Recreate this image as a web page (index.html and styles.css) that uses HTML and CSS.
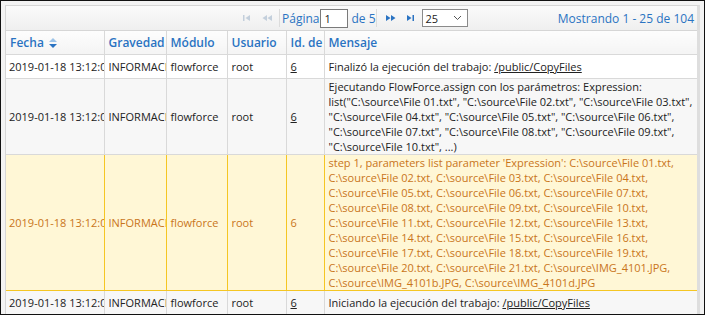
FILE: index.html
```html
<!DOCTYPE html>
<html>
<head>
    <title>Registro</title>
    <link rel="stylesheet" href="styles.css">
</head>
<body>
    <div class="frame">
        <div class="grid">
            <!-- Barra de paginación -->
            <div class="toolbar">
                <div class="pager">
                    <span class="pbtn off first">
                        <svg width="10" height="8" viewBox="0 0 10 8"><rect x="1" y="1" width="1.5" height="6"/><path d="M8 1 L3.5 4 L8 7 Z"/></svg>
                    </span>
                    <span class="pbtn off">
                        <svg width="12" height="8" viewBox="0 0 12 8"><path d="M6 1 L1.5 4 L6 7 Z M11 1 L6.5 4 L11 7 Z"/></svg>
                    </span>
                    <span class="sep"></span>
                    <span class="lbl">Página</span>
                    <input class="page-input" type="text" value="1">
                    <span class="lbl">de 5</span>
                    <span class="sep sep-right"></span>
                    <span class="pbtn next">
                        <svg width="12" height="8" viewBox="0 0 12 8"><path d="M1 1 L5.5 4 L1 7 Z M6 1 L10.5 4 L6 7 Z"/></svg>
                    </span>
                    <span class="pbtn">
                        <svg width="10" height="8" viewBox="0 0 10 8"><path d="M2 1 L6.5 4 L2 7 Z"/><rect x="7.5" y="1" width="1.5" height="6"/></svg>
                    </span>
                    <span class="size-select">
                        <span>25</span>
                        <svg width="9" height="6" viewBox="0 0 9 6"><path d="M1 1 L4.5 4.5 L8 1" fill="none" stroke="#555" stroke-width="1"/></svg>
                    </span>
                </div>
                <div class="count">Mostrando 1 - 25 de 104</div>
            </div>

            <!-- Tabla de mensajes -->
            <table class="log">
                <colgroup>
                    <col style="width:98px">
                    <col style="width:62px">
                    <col style="width:61px">
                    <col style="width:59px">
                    <col style="width:38px">
                    <col>
                </colgroup>
                <thead>
                    <tr>
                        <th>Fecha <span class="sort"><svg width="8" height="11" viewBox="0 0 8 11"><path d="M4 0 L8 4 L0 4 Z" fill="#9cc3e8"/><path d="M0 6 L8 6 L4 10 Z" fill="#2a73c2"/></svg></span></th>
                        <th>Gravedad</th>
                        <th>Módulo</th>
                        <th>Usuario</th>
                        <th>Id. de</th>
                        <th>Mensaje</th>
                    </tr>
                </thead>
                <tbody>
                    <tr>
                        <td class="cut"><div class="clip">2019-01-18 13:12:03</div></td>
                        <td class="cut"><div class="clip">INFORMACIÓN</div></td>
                        <td>flowforce</td>
                        <td>root</td>
                        <td><a href="#">6</a></td>
                        <td>Finalizó la ejecución del trabajo: <a href="#">/public/CopyFiles</a></td>
                    </tr>
                    <tr class="alt">
                        <td class="cut"><div class="clip">2019-01-18 13:12:03</div></td>
                        <td class="cut"><div class="clip">INFORMACIÓN</div></td>
                        <td>flowforce</td>
                        <td>root</td>
                        <td><a href="#">6</a></td>
                        <td>Ejecutando FlowForce.assign con los parámetros: Expression: list("C:\source\File 01.txt", "C:\source\File 02.txt", "C:\source\File 03.txt", "C:\source\File 04.txt", "C:\source\File 05.txt", "C:\source\File 06.txt", "C:\source\File 07.txt", "C:\source\File 08.txt", "C:\source\File 09.txt", "C:\source\File 10.txt", ...)</td>
                    </tr>
                    <tr class="warn">
                        <td class="cut"><div class="clip">2019-01-18 13:12:03</div></td>
                        <td class="cut"><div class="clip">INFORMACIÓN</div></td>
                        <td>flowforce</td>
                        <td>root</td>
                        <td>6</td>
                        <td>step 1, parameters list parameter 'Expression': C:\source\File 01.txt, C:\source\File 02.txt, C:\source\File 03.txt, C:\source\File 04.txt, C:\source\File 05.txt, C:\source\File 06.txt, C:\source\File 07.txt, C:\source\File 08.txt, C:\source\File 09.txt, C:\source\File 10.txt, C:\source\File 11.txt, C:\source\File 12.txt, C:\source\File 13.txt, C:\source\File 14.txt, C:\source\File 15.txt, C:\source\File 16.txt, C:\source\File 17.txt, C:\source\File 18.txt, C:\source\File 19.txt, C:\source\File 20.txt, C:\source\File 21.txt, C:\source\IMG_4101.JPG, C:\source\IMG_4101b.JPG, C:\source\IMG_4101d.JPG</td>
                    </tr>
                    <tr class="alt">
                        <td class="cut"><div class="clip">2019-01-18 13:12:03</div></td>
                        <td class="cut"><div class="clip">INFORMACIÓN</div></td>
                        <td>flowforce</td>
                        <td>root</td>
                        <td><a href="#">6</a></td>
                        <td>Iniciando la ejecución del trabajo: <a href="#">/public/CopyFiles</a></td>
                    </tr>
                </tbody>
            </table>
        </div>
    </div>
</body>
</html>
```

FILE: styles.css
```css
body {
    margin: 0;
    padding: 0;
    font-family: "Open Sans", "Noto Sans", sans-serif;
    font-size: 11px;
    color: #222;
}

/* Marco exterior de la captura */
.frame {
    width: 705px;
    height: 315px;
    box-sizing: border-box;
    border: 1px solid #111;
    background-color: #f3f3f3;
    padding: 4px 4px 0 4px;
    overflow: hidden;
}

.grid {
    border: 1px solid #d6d6d6;
    border-right: 3px solid #dedede;
    background-color: #fff;
}

/* Barra de paginación */
.toolbar {
    display: flex;
    align-items: center;
    height: 24px;
    padding: 0 3px 0 0;
    background: linear-gradient(#fbfbfb, #efefef);
    border-bottom: 1px solid #d6d6d6;
}

.pager {
    display: flex;
    align-items: center;
    padding-left: 236px;
}

.pbtn {
    display: inline-flex;
    align-items: center;
    fill: #2a73c2;
}

.pbtn.off {
    fill: #c3cfdc;
}

.pbtn.first {
    margin-right: 9px;
}

.pbtn.next {
    margin-right: 8px;
}

.sep {
    width: 1px;
    height: 18px;
    background-color: #dcdcdc;
    margin: 0 2px 0 6px;
}

.sep.sep-right {
    margin: 0 8px 0 0;
}

.lbl {
    color: #2a73c2;
    font-size: 12px;
}

.page-input {
    width: 28px;
    height: 19px;
    box-sizing: border-box;
    margin: 0 3px 0 1px;
    padding: 0 3px;
    border: 1px solid #7a7a7a;
    font-family: inherit;
    font-size: 11px;
    color: #222;
}

.size-select {
    display: flex;
    align-items: center;
    justify-content: space-between;
    width: 46px;
    height: 18px;
    box-sizing: border-box;
    margin-left: 7px;
    padding: 0 5px 0 3px;
    border: 1px solid #8a8a8a;
    background-color: #fff;
    font-size: 11px;
}

.count {
    margin-left: auto;
    color: #2a73c2;
    font-size: 12px;
}

/* Tabla */
.log {
    width: 100%;
    table-layout: fixed;
    border-collapse: collapse;
}

.log th {
    height: 23px;
    padding: 0 4px;
    text-align: left;
    font-weight: 600;
    font-size: 12px;
    color: #2a73c2;
    background: linear-gradient(#fdfdfd, #f4f4f4);
    border: 1px solid #d9d9d9;
    border-top: none;
    white-space: nowrap;
    overflow: hidden;
}

.log th:first-child,
.log td:first-child {
    border-left: none;
}

.log th:last-child,
.log td:last-child {
    border-right: none;
}

.sort {
    display: inline-block;
    vertical-align: middle;
    margin-left: 2px;
}

.sort svg {
    display: block;
}

.log td {
    height: 23px;
    padding: 0 4px;
    line-height: 15px;
    vertical-align: middle;
    border: 1px solid #d9d9d9;
}

/* Texto recortado en el borde de la celda, como en la rejilla original */
.log td.cut {
    padding-right: 0;
}

.clip {
    white-space: nowrap;
    overflow: hidden;
}

.log td:first-child .clip {
    margin-left: -1px;
}

.log td a {
    color: #222;
}

.log tr.alt td {
    background-color: #f7f7f7;
}

.log tr.warn td {
    background-color: #fff7d6;
    color: #c9751a;
    border-color: #f5c623;
}
```
